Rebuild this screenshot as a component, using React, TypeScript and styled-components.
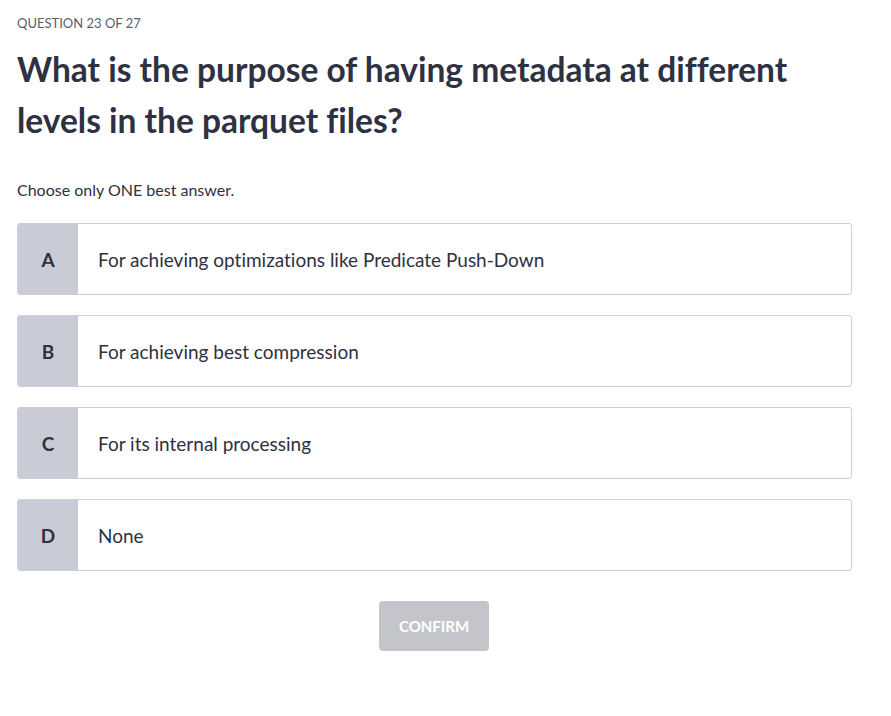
import React from "react";
import styled, { createGlobalStyle } from "styled-components";

const Global = createGlobalStyle`
  html, body { margin: 0; padding: 0; background: #fff; }
  body {
    font-family: "Lato", "Liberation Sans", sans-serif;
    color: #2e3142;
    font-variant-ligatures: none;
  }
`;

const Page = styled.div`
  width: 834px;
  padding: 14px 0 0 17px;
  display: flex;
  flex-direction: column;
`;

const Counter = styled.div`
  font-size: 13px;
  color: #5b5e6d;
  line-height: 18px;
`;

const Title = styled.h1`
  margin: 12px 0 0;
  font-size: 33.5px;
  font-weight: 700;
  line-height: 51px;
  color: #2e3142;
`;

const Hint = styled.p`
  margin: 34px 0 0;
  font-size: 16px;
  line-height: 20px;
  color: #2e3142;
`;

const Options = styled.div`
  margin-top: 23px;
  width: 835px;
  display: flex;
  flex-direction: column;
  gap: 20px;
`;

const Option = styled.button`
  display: flex;
  align-items: stretch;
  height: 72px;
  padding: 0;
  border: 1px solid #cdcfd6;
  border-radius: 3px;
  background: #fff;
  overflow: hidden;
  cursor: pointer;
  font-family: inherit;
  font-variant-ligatures: none;
  text-align: left;
`;

const Letter = styled.span`
  width: 60px;
  flex: none;
  background: #c9ccd6;
  display: flex;
  align-items: center;
  justify-content: center;
  font-size: 19px;
  font-weight: 700;
  color: #2e3142;
`;

const Label = styled.span`
  display: flex;
  align-items: center;
  padding-left: 20px;
  font-size: 19px;
  color: #2e3142;
`;

const Actions = styled.div`
  display: flex;
  justify-content: center;
  margin-top: 30px;
`;

const Confirm = styled.button`
  width: 110px;
  height: 50px;
  border: none;
  border-radius: 4px;
  background: #c4c5cb;
  color: #fff;
  font-family: inherit;
  font-size: 15px;
  font-weight: 700;
`;

const answers = [
  ["A", "For achieving optimizations like Predicate Push-Down"],
  ["B", "For achieving best compression"],
  ["C", "For its internal processing"],
  ["D", "None"],
];

export default function App() {
  return (
    <>
      <Global />
      <Page>
        <Counter>QUESTION 23 OF 27</Counter>
        <Title>
          What is the purpose of having metadata at different
          <br />
          levels in the parquet files?
        </Title>
        <Hint>Choose only ONE best answer.</Hint>
        <Options>
          {answers.map(([l, t]) => (
            <Option key={l}>
              <Letter>{l}</Letter>
              <Label>{t}</Label>
            </Option>
          ))}
        </Options>
        <Actions>
          <Confirm disabled>CONFIRM</Confirm>
        </Actions>
      </Page>
    </>
  );
}
